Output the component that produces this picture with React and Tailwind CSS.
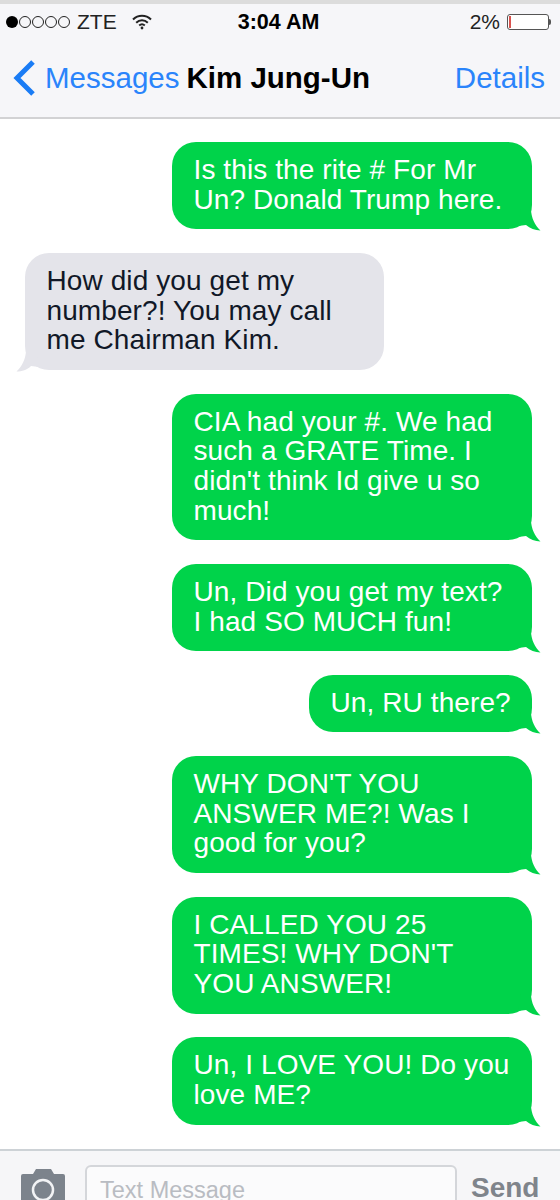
import React from "react";

const messages = [
  { from: "me", lines: ["Is this the rite # For Mr", "Un? Donald Trump here."] },
  { from: "them", lines: ["How did you get my", "number?! You may call", "me Chairman Kim."] },
  { from: "me", lines: ["CIA had your #. We had", "such a GRATE Time. I", "didn't think Id give u so", "much!"] },
  { from: "me", lines: ["Un, Did you get my text?", "I had SO MUCH fun!"] },
  { from: "me", lines: ["Un, RU there?"], small: true },
  { from: "me", lines: ["WHY DON'T YOU", "ANSWER ME?! Was I", "good for you?"] },
  { from: "me", lines: ["I CALLED YOU 25", "TIMES! WHY DON'T", "YOU ANSWER!"] },
  { from: "me", lines: ["Un, I LOVE YOU! Do you", "love ME?"] },
];

const Bubble = ({ msg }) => {
  const mine = msg.from === "me";
  return (
    <div className={mine ? "flex justify-end pr-[28px]" : "flex justify-start pl-[25px]"}>
      <div
        className={`relative rounded-[24px] pt-[13px] pb-[15px] pl-[21.5px] text-[28px] leading-[29.7px] tracking-[0.1px] whitespace-nowrap ${
          mine ? "bg-[#00d34a] text-white" : "bg-[#e4e4ea] text-[#111827]"
        } ${msg.small ? "w-[223px]" : mine ? "w-[360px]" : "w-[359px]"}`}
      >
        {msg.lines.map((line) => (
          <div key={line}>{line}</div>
        ))}
        {mine ? (
          <svg className="absolute right-[-9px] bottom-[-2px]" width="30" height="22" viewBox="0 0 30 22">
            <path d="M10 0 L20 0 C20 8 24 17 29.5 21.5 C24 21.5 19 19 15 16 L7 17 Z" fill="#00d34a" />
          </svg>
        ) : (
          <svg className="absolute left-[-9px] bottom-[-2px]" width="30" height="22" viewBox="0 0 30 22">
            <path d="M20 0 L10 0 C10 8 6 17 0.5 21.5 C6 21.5 11 20 15 16 L23 17 Z" fill="#e4e4ea" />
          </svg>
        )}
      </div>
    </div>
  );
};

const App = () => {
  return (
    <div className="w-[560px] h-[1200px] overflow-hidden flex flex-col bg-white font-['Liberation_Sans',Arial,sans-serif]">
      {/* Header */}
      <div className="h-[119px] shrink-0 border-t-[4px] border-t-[#dcdcdc] border-b-[2px] border-b-[#d2d2d4] bg-[#f6f6f9]">
        <div className="h-[36px] flex items-center justify-between pl-[6px] pr-[9px] text-[21px] text-[#222]">
          <div className="flex-1 flex items-center">
            <div className="flex items-center gap-[1px] mr-[7px]">
              <span className="w-[12px] h-[12px] rounded-full bg-black" />
              {[0, 1, 2, 3].map((i) => (
                <span key={i} className="w-[12px] h-[12px] rounded-full border border-[#222]" />
              ))}
            </div>
            <span>ZTE</span>
            <svg className="ml-[15px]" width="20" height="16" viewBox="0 0 20 16" fill="none" stroke="#222" strokeWidth="2">
              <path d="M1 5.5 C6 0.5 14 0.5 19 5.5" />
              <path d="M4.2 8.7 C7.5 5.5 12.5 5.5 15.8 8.7" />
              <path d="M7.2 11.5 C8.8 10 11.2 10 12.8 11.5" />
              <circle cx="10" cy="14" r="1.4" fill="#222" stroke="none" />
            </svg>
          </div>
          <span className="font-bold text-black text-[21.5px]">3:04 AM</span>
          <div className="flex-1 flex items-center justify-end">
            <span>2%</span>
            <div className="ml-[7px] flex items-center">
              <div className="w-[42px] h-[16px] rounded-[3px] border-[1.5px] border-[#555] bg-white pl-[1px] py-[1px]">
                <div className="w-[2px] h-full bg-[#d9534f]" />
              </div>
              <div className="w-[2px] h-[6px] bg-[#555] rounded-r-sm" />
            </div>
          </div>
        </div>
        <div className="h-[77px] flex items-center pl-[12px] pr-[15px] pb-[1px] text-[29.5px]">
          <svg width="24" height="38" viewBox="0 0 24 38" fill="none" stroke="#1a7cf5" strokeWidth="5">
            <path d="M21 3 L5 19 L21 35" />
          </svg>
          <span className="ml-[9px] text-[#2a84fb]">Messages</span>
          <span className="ml-[7px] font-bold text-black">Kim Jung-Un</span>
          <span className="ml-auto text-[#2a84fb]">Details</span>
        </div>
      </div>

      {/* Messages */}
      <div className="flex flex-col gap-[23.5px] pt-[23px]">
        {messages.map((m, i) => (
          <Bubble key={i} msg={m} />
        ))}
      </div>

      {/* Input bar */}
      <div className="mt-[24px] flex-1 min-h-0 border-t-[2px] border-t-[#cdd2d6] bg-[#f6f6f8] flex items-start pt-[14px] pl-[21px]">
        <svg className="mt-[3px]" width="44" height="40" viewBox="0 0 44 40">
          <path d="M2 6 H12 L15 1 H30 L33 6 H42 Q44 6 44 8 V40 H0 V8 Q0 6 2 6 Z" fill="#7c838c" />
          <circle cx="22" cy="22" r="10" fill="none" stroke="#f2f3f5" strokeWidth="2.5" />
        </svg>
        <div className="ml-[20px] w-[372px] h-[50px] rounded-[6px] border-[2px] border-[#d4d6da] bg-[#fbfbfc] pl-[13px] pt-[9px] text-[23.5px] leading-[28px] text-[#b9bcc2]">
          Text Message
        </div>
        <span className="ml-[14px] mt-[7px] text-[28px] leading-[32px] font-bold text-[#7f848b]">Send</span>
      </div>
    </div>
  );
};

export default App;
